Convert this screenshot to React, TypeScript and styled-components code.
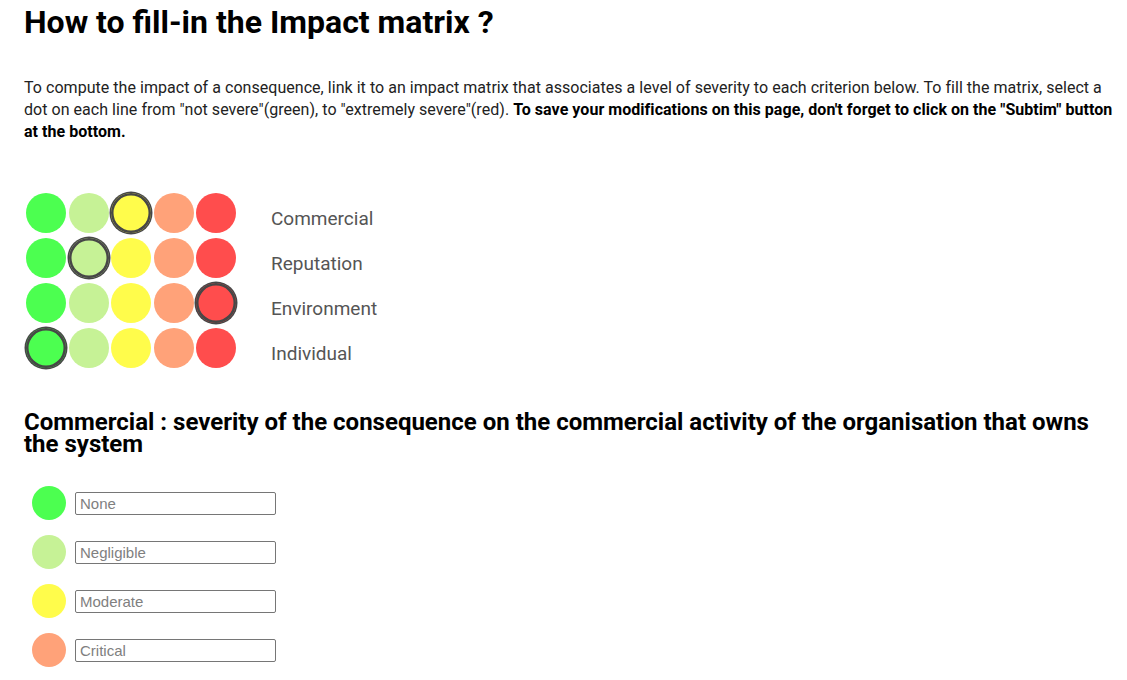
import React from "react";
import styled, { createGlobalStyle } from "styled-components";

const levels = [
  { color: "#4cff50", label: "None" },
  { color: "#c6f296", label: "Negligible" },
  { color: "#fffc4b", label: "Moderate" },
  { color: "#ffa279", label: "Critical" },
  { color: "#ff4d4d", label: "Catastrophic" },
];

const criteria = [
  { name: "Commercial", selected: 2 },
  { name: "Reputation", selected: 1 },
  { name: "Environment", selected: 4 },
  { name: "Individual", selected: 0 },
];

const GlobalStyle = createGlobalStyle`
  body {
    margin: 0;
    background: #fff;
    font-family: Roboto, "Liberation Sans", sans-serif;
    color: #111;
  }
`;

export default function App() {
  return (
    <>
      <GlobalStyle />
      <Page>
        <Title>How to fill-in the Impact matrix ?</Title>
        <Intro>
          To compute the impact of a consequence, link it to an impact matrix
          that associates a level of severity to each criterion below. To fill
          the matrix, select a dot on each line from "not severe"(green), to
          "extremely severe"(red).{" "}
          <strong>
            To save your modifications on this page, don't forget to click on
            the "Subtim" button at the bottom.
          </strong>
        </Intro>

        <Matrix>
          {criteria.map((c) => (
            <MatrixRow key={c.name}>
              <Dots>
                {levels.map((l, i) => (
                  <Dot key={i} color={l.color} selected={i === c.selected} />
                ))}
              </Dots>
              <CriterionLabel>{c.name}</CriterionLabel>
            </MatrixRow>
          ))}
        </Matrix>

        <SectionTitle>
          Commercial : severity of the consequence on the commercial activity
          of the organisation that owns the system
        </SectionTitle>

        <ScaleList>
          {levels.slice(0, 4).map((l) => (
            <ScaleRow key={l.label}>
              <ScaleDot color={l.color} />
              <ScaleInput placeholder={l.label} />
            </ScaleRow>
          ))}
        </ScaleList>
      </Page>
    </>
  );
}

const Page = styled.div`
  padding: 0 10px 0 24px;
`;

const Title = styled.h1`
  margin: 0;
  padding-top: 4px;
  font-size: 32px;
  line-height: 36px;
  font-weight: 700;
  color: #000;
`;

const Intro = styled.p`
  margin: 37px 0 0;
  font-size: 16px;
  line-height: 22px;
  letter-spacing: 0.04px;
  color: #222;

  strong {
    color: #000;
    font-weight: 700;
  }
`;

const Matrix = styled.div`
  margin-top: 50px;
  display: flex;
  flex-direction: column;
  gap: 5px;
`;

const MatrixRow = styled.div`
  display: flex;
  align-items: center;
  height: 40px;
`;

const Dots = styled.div`
  display: flex;
  gap: 2.5px;
  padding-left: 2px;
`;

const Dot = styled.div<{ color: string; selected: boolean }>`
  width: 40px;
  height: 40px;
  border-radius: 50%;
  background: ${(p) => p.color};
  box-shadow: ${(p) =>
    p.selected ? "0 0 0 1.5px #474747, inset 0 0 0 2.5px #474747" : "none"};
  position: relative;
  z-index: ${(p) => (p.selected ? 1 : 0)};
`;

const CriterionLabel = styled.span`
  margin-left: 35px;
  padding-top: 10px;
  font-size: 19px;
  color: #555;
`;

const SectionTitle = styled.h2`
  margin: 43px 0 0;
  font-size: 24px;
  line-height: 22px;
  font-weight: 700;
  color: #000;
`;

const ScaleList = styled.div`
  margin-top: 31px;
  display: flex;
  flex-direction: column;
  gap: 15px;
`;

const ScaleRow = styled.div`
  display: flex;
  align-items: center;
  gap: 9px;
  padding-left: 8px;
`;

const ScaleDot = styled.div<{ color: string }>`
  width: 34px;
  height: 34px;
  border-radius: 50%;
  background: ${(p) => p.color};
`;

const ScaleInput = styled.input`
  box-sizing: border-box;
  width: 201px;
  height: 23px;
  padding: 0 4px;
  border: 1px solid #767676;
  border-radius: 2px;
  font-family: "Liberation Sans", Arial, sans-serif;
  font-size: 15px;

  &::placeholder {
    color: #808080;
  }
`;
